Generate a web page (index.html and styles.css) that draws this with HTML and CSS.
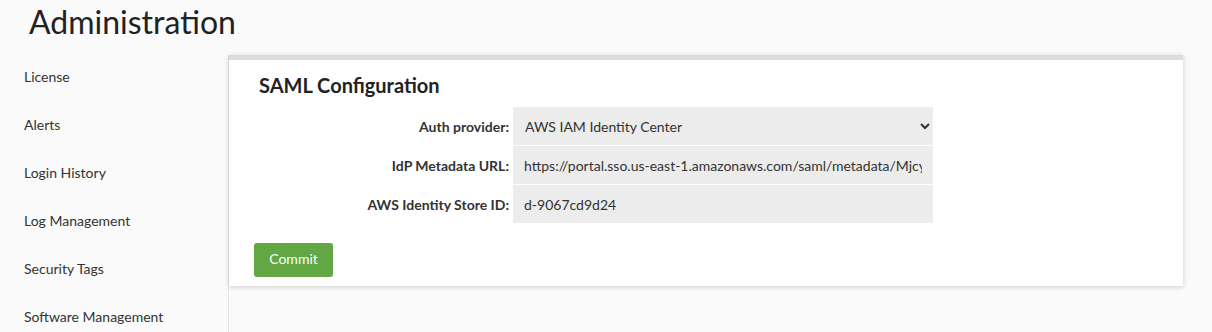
FILE: index.html
```html
<!DOCTYPE html>
<html lang="en">
<head>
  <meta charset="UTF-8">
  <meta name="viewport" content="width=device-width, initial-scale=1.0">
  <title>Administration</title>
  <link rel="stylesheet" href="styles.css">
</head>
<body>
  <h1 class="page-title">Administration</h1>

  <div class="layout">
    <ul class="sidebar">
      <li>License</li>
      <li>Alerts</li>
      <li>Login History</li>
      <li>Log Management</li>
      <li>Security Tags</li>
      <li>Software Management</li>
    </ul>

    <div class="content">
      <div class="card">
        <h2>SAML Configuration</h2>

        <div class="form">
          <label for="provider">Auth provider:</label>
          <select id="provider">
            <option>AWS IAM Identity Center</option>
            <option>Okta</option>
            <option>Azure AD</option>
          </select>

          <label for="metadata">IdP Metadata URL:</label>
          <input
            type="text"
            id="metadata"
            value="https://portal.sso.us-east-1.amazonaws.com/saml/metadata/MjcyNDk2MzM4NTY3X2lucy0xZjQ2YTJiZDhl"
          />

          <label for="store">AWS Identity Store ID:</label>
          <input
            type="text"
            id="store"
            value="d-9067cd9d24"
          />
        </div>

        <button class="commit">Commit</button>
      </div>
    </div>
  </div>
</body>
</html>
```

FILE: styles.css
```css
body {
  font-family: Lato, "Open Sans", sans-serif;
  margin: 0;
  background-color: #fafafa;
  color: #333;
}

.page-title {
  font-size: 32px;
  font-weight: 400;
  line-height: 38px;
  margin: 3px 0 14px 29px;
  color: #222;
}

.layout {
  display: flex;
  align-items: stretch;
}

.sidebar {
  list-style: none;
  margin: 0;
  padding: 0;
  width: 228px;
  flex-shrink: 0;
  border-right: 1px solid #e4e4e4;
}

.sidebar li {
  font-size: 14px;
  line-height: 17px;
  padding: 13px 0 18px 24px;
  color: #333;
}

.content {
  flex-grow: 1;
  padding-right: 29px;
}

.card {
  background-color: #fff;
  border-top: 5px solid #dcdcdc;
  box-shadow: 0 1px 5px rgba(0, 0, 0, 0.18);
  padding: 0 0 9px;
}

.card h2 {
  font-size: 20px;
  font-weight: 700;
  line-height: 24px;
  margin: 0 0 0 30px;
  padding: 13px 0 10px;
  color: #222;
}

.form {
  display: grid;
  grid-template-columns: 280px 420px;
  column-gap: 4px;
  row-gap: 1px;
  align-items: center;
}

.form label {
  font-size: 14px;
  font-weight: 700;
  text-align: right;
  color: #333;
}

.form select,
.form input {
  height: 38px;
  width: 100%;
  box-sizing: border-box;
  font-family: Lato, "Open Sans", sans-serif;
  font-size: 14px;
  color: #333;
  background-color: #ececec;
  border: none;
  border-radius: 0;
  padding: 0 11px;
  outline: none;
}

.form select {
  padding-left: 8px;
}

.commit {
  margin: 20px 0 0 25px;
  width: 79px;
  height: 34px;
  padding: 0 0 3px;
  font-family: Lato, "Open Sans", sans-serif;
  font-size: 14px;
  color: #fff;
  background-color: #62a744;
  border: none;
  border-radius: 3px;
  cursor: pointer;
}

.commit:hover {
  background-color: #55953a;
}
```
